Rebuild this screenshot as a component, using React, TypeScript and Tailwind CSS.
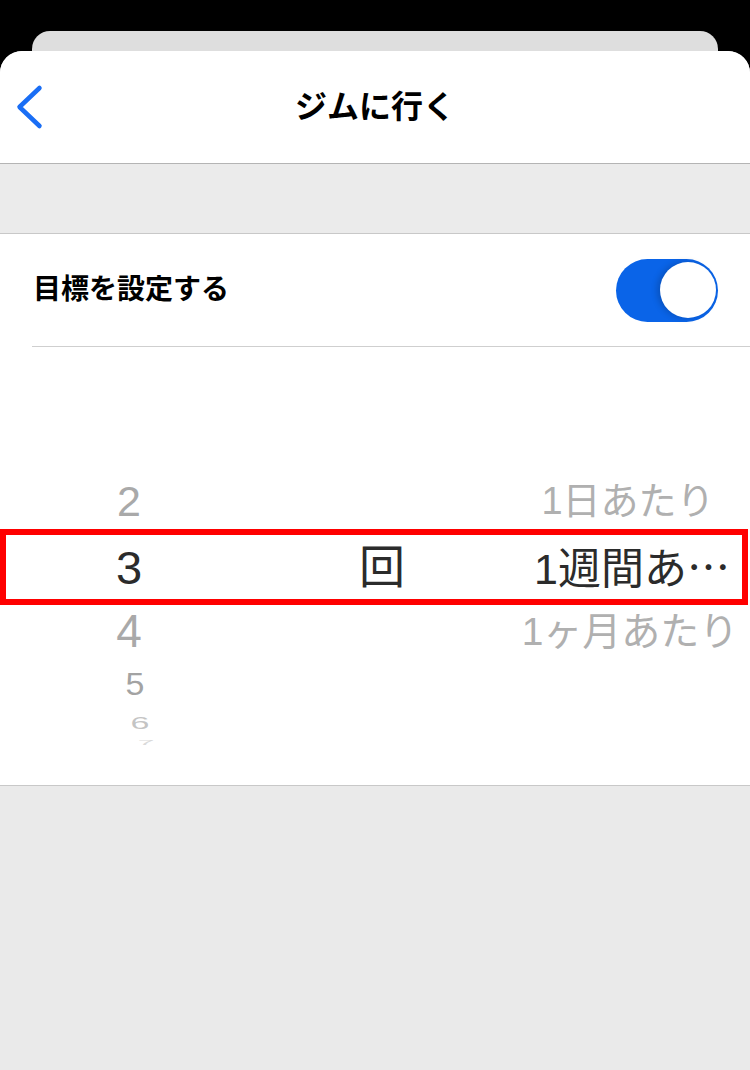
export default function App() {
  return (
    <div className="w-[750px] h-[1070px] bg-black flex flex-col overflow-hidden font-['Liberation_Sans','Noto_Sans_CJK_JP',sans-serif]">
      <div className="h-[31px] shrink-0" />
      <div className="mx-[32px] h-[20px] shrink-0 rounded-t-[18px] bg-[#dedede]" />
      <div className="flex-1 flex flex-col rounded-t-[22px] bg-[#eaeaea] overflow-hidden">
        {/* nav bar */}
        <header className="h-[113px] shrink-0 grid grid-cols-[1fr_auto_1fr] items-center bg-white border-b border-[#b4b4b4]">
          <button className="justify-self-start pl-[14px] flex">
            <svg width="30" height="46" viewBox="0 0 30 46">
              <path
                d="M25.5 4 L5.5 23 L25.5 42"
                fill="none"
                stroke="#1a6ef5"
                strokeWidth="4.5"
                strokeLinecap="round"
                strokeLinejoin="round"
              />
            </svg>
          </button>
          <h1 className="text-[32px] leading-none font-bold text-black">ジムに行く</h1>
          <div />
        </header>

        <div className="h-[69px] shrink-0 bg-[#ebebeb]" />

        <section className="shrink-0 flex flex-col bg-white border-y border-[#c8c8c8]">
          {/* goal toggle */}
          <div className="ml-[32px] h-[113px] flex items-center justify-between pr-[32px] pl-[1px] border-b border-[#cfcfcf]">
            <span className="text-[28px] leading-none font-bold text-black">目標を設定する</span>
            <div className="w-[102px] h-[63px] rounded-full bg-[#0a64e8] flex items-center justify-end pr-[2px]">
              <div className="w-[56px] h-[56px] rounded-full bg-white shadow-[-3px_0_6px_rgba(0,0,0,0.18)]" />
            </div>
          </div>

          {/* picker */}
          <div className="h-[438px] flex flex-col">
            <div className="h-[126px]" />
            <div className="h-[56px] flex items-center leading-none text-[#a9a9a9]">
              <div className="w-[258px] text-center text-[43px]">2</div>
              <div className="w-[248px]" />
              <div className="w-[244px] text-center text-[38px] text-[#b0b0b0]">1日あたり</div>
            </div>
            <div className="h-[76px] w-[748px] box-border border-[6px] border-[#ff0000] flex items-center leading-none text-[#2b2b2b]">
              <div className="w-[246px] text-center text-[47px]">3</div>
              <div className="w-[260px] text-center text-[46px]">回</div>
              <div className="w-[230px] pl-[10px] text-center text-[43px] whitespace-nowrap">
                1週間あ<span className="font-['Noto_Sans_CJK_JP',sans-serif]">⋯</span>
              </div>
            </div>
            <div className="h-[52px] flex items-center leading-none text-[#a9a9a9]">
              <div className="w-[258px] text-center text-[46px]">4</div>
              <div className="w-[248px]" />
              <div className="w-[244px] pl-[4px] text-center text-[39px] text-[#b0b0b0] whitespace-nowrap">1ヶ月あたり</div>
            </div>
            <div className="h-[53px] flex items-center leading-none text-[#a3a3a3]">
              <div className="w-[258px] pl-[12px] text-center text-[34px]">
                <span className="inline-block scale-y-[0.9]">5</span>
              </div>
            </div>
            <div className="h-[25px] flex items-center leading-none text-[#c4c4c4]">
              <div className="w-[258px] pl-[22px] text-center text-[34px]">
                <span className="inline-block scale-y-[0.5]">6</span>
              </div>
            </div>
            <div className="h-[15px] flex items-center leading-none text-[#dadada]">
              <div className="w-[258px] pl-[34px] text-center text-[30px]">
                <span className="inline-block scale-y-[0.22]">7</span>
              </div>
            </div>
            <div className="flex-1" />
          </div>
        </section>

        <div className="flex-1 bg-[#eaeaea]" />
      </div>
    </div>
  );
}
